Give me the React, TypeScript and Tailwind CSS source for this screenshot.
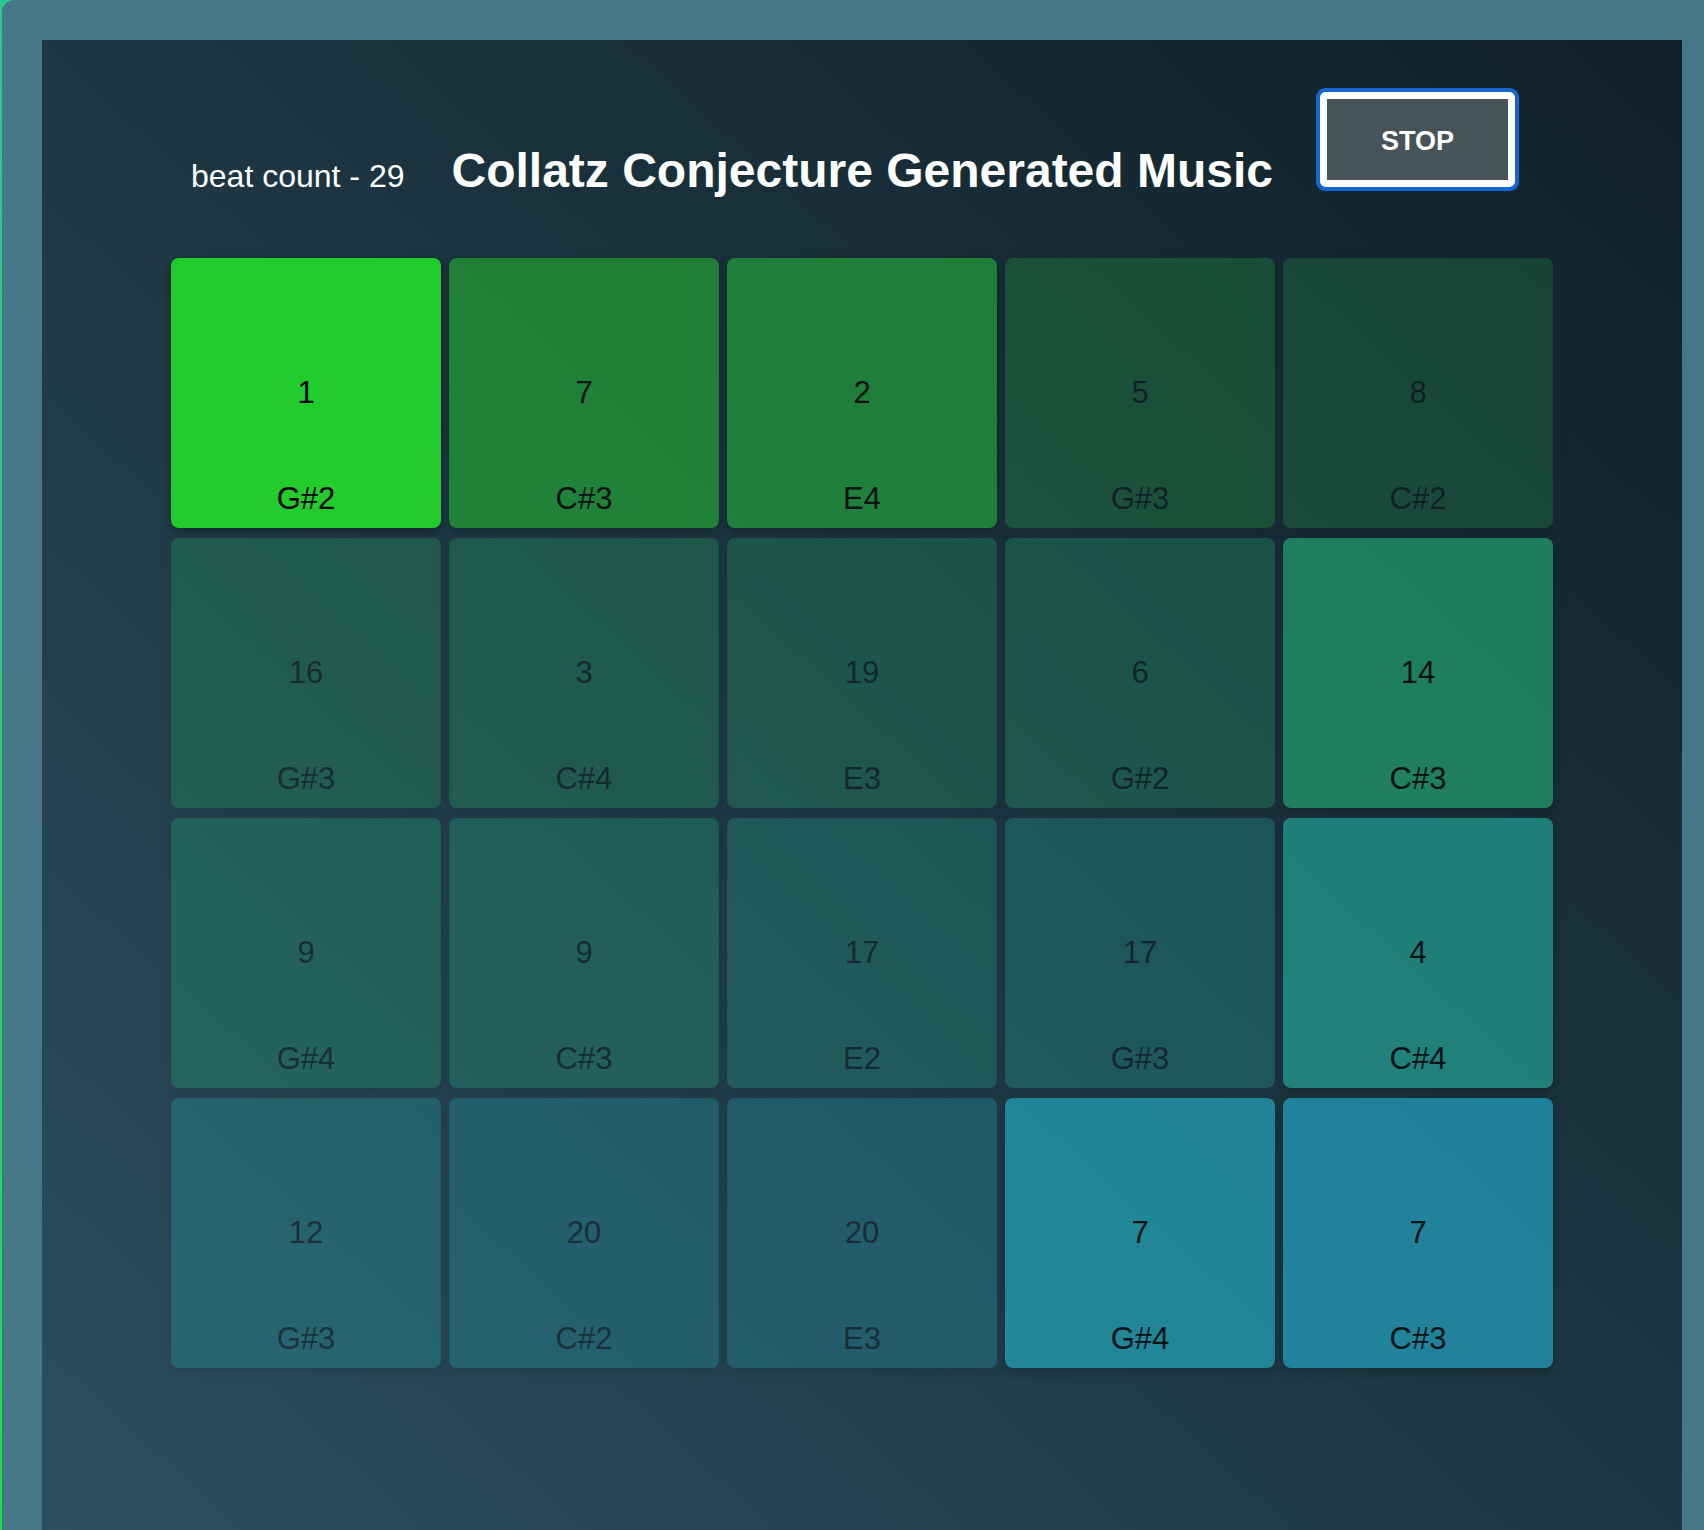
import React from "react";

type Cell = { value: number; note: string; cls: string };

const cells: Cell[] = [
  { value: 1, note: "G#2", cls: "bg-[#22cc2c] opacity-100" },
  { value: 7, note: "C#3", cls: "bg-[#23aa35] opacity-[0.65]" },
  { value: 2, note: "E4", cls: "bg-[#23aa3a] opacity-[0.65]" },
  { value: 5, note: "G#3", cls: "bg-[#23aa46] opacity-[0.28]" },
  { value: 8, note: "C#2", cls: "bg-[#23aa4e] opacity-[0.24]" },
  { value: 16, note: "G#3", cls: "bg-[#23aa56] opacity-[0.28]" },
  { value: 3, note: "C#4", cls: "bg-[#23aa5d] opacity-[0.29]" },
  { value: 19, note: "E3", cls: "bg-[#23aa64] opacity-[0.28]" },
  { value: 6, note: "G#2", cls: "bg-[#23aa6a] opacity-[0.29]" },
  { value: 14, note: "C#3", cls: "bg-[#23aa72] opacity-[0.65]" },
  { value: 9, note: "G#4", cls: "bg-[#23aa78] opacity-[0.3]" },
  { value: 9, note: "C#3", cls: "bg-[#23aa81] opacity-[0.3]" },
  { value: 17, note: "E2", cls: "bg-[#23aa8c] opacity-[0.28]" },
  { value: 17, note: "G#3", cls: "bg-[#23aa94] opacity-[0.29]" },
  { value: 4, note: "C#4", cls: "bg-[#23aa9b] opacity-[0.65]" },
  { value: 12, note: "G#3", cls: "bg-[#23aaac] opacity-[0.29]" },
  { value: 20, note: "C#2", cls: "bg-[#23aab6] opacity-[0.28]" },
  { value: 20, note: "E3", cls: "bg-[#23aabc] opacity-[0.27]" },
  { value: 7, note: "G#4", cls: "bg-[#23aac0] opacity-[0.68]" },
  { value: 7, note: "C#3", cls: "bg-[#23aaca] opacity-[0.66]" },
];

export default function App() {
  return (
    <div className="h-[1530px] overflow-hidden bg-linear-to-b from-[#26c98f] to-[#22de44] pl-[2px] font-['Liberation_Sans',Arial,sans-serif]">
      <div className="h-full rounded-tl-[12px] bg-[#457787] pl-[40px] pr-[22px] pt-[40px]">
        <div className="h-[1490px] bg-linear-to-tr from-[#2c4f5e] to-[#102028] pt-[52px]">
          {/* header */}
          <div className="flex items-start pl-[149px]">
            <div className="mt-[51px] flex items-baseline gap-[47px]">
              <span className="text-[32px] leading-[36px] text-white">beat count - 29</span>
              <h1 className="text-[48px] font-bold leading-[56px] text-white">
                Collatz Conjecture Generated Music
              </h1>
            </div>
            <button className="ml-[47px] flex h-[95px] w-[195px] items-center justify-center rounded-[5px] border-[7px] border-white bg-[#465358] pt-[3px] text-[27px] font-bold text-white outline-4 outline-[#1565d2]">
              STOP
            </button>
          </div>
          {/* grid */}
          <div className="mt-[59px] grid grid-cols-[repeat(5,270px)] justify-center gap-x-2 gap-y-[10px]">
            {cells.map((c, i) => (
              <div
                key={i}
                className={`grid h-[270px] grid-rows-[1fr_auto_1fr] rounded-lg text-black shadow-[0_4px_10px_rgba(0,0,0,0.35)] ${c.cls}`}
              >
                <div />
                <div className="text-center text-[31px] leading-[36px]">{c.value}</div>
                <div className="self-end pb-[11px] text-center text-[31px] leading-[36px]">{c.note}</div>
              </div>
            ))}
          </div>
        </div>
      </div>
    </div>
  );
}
